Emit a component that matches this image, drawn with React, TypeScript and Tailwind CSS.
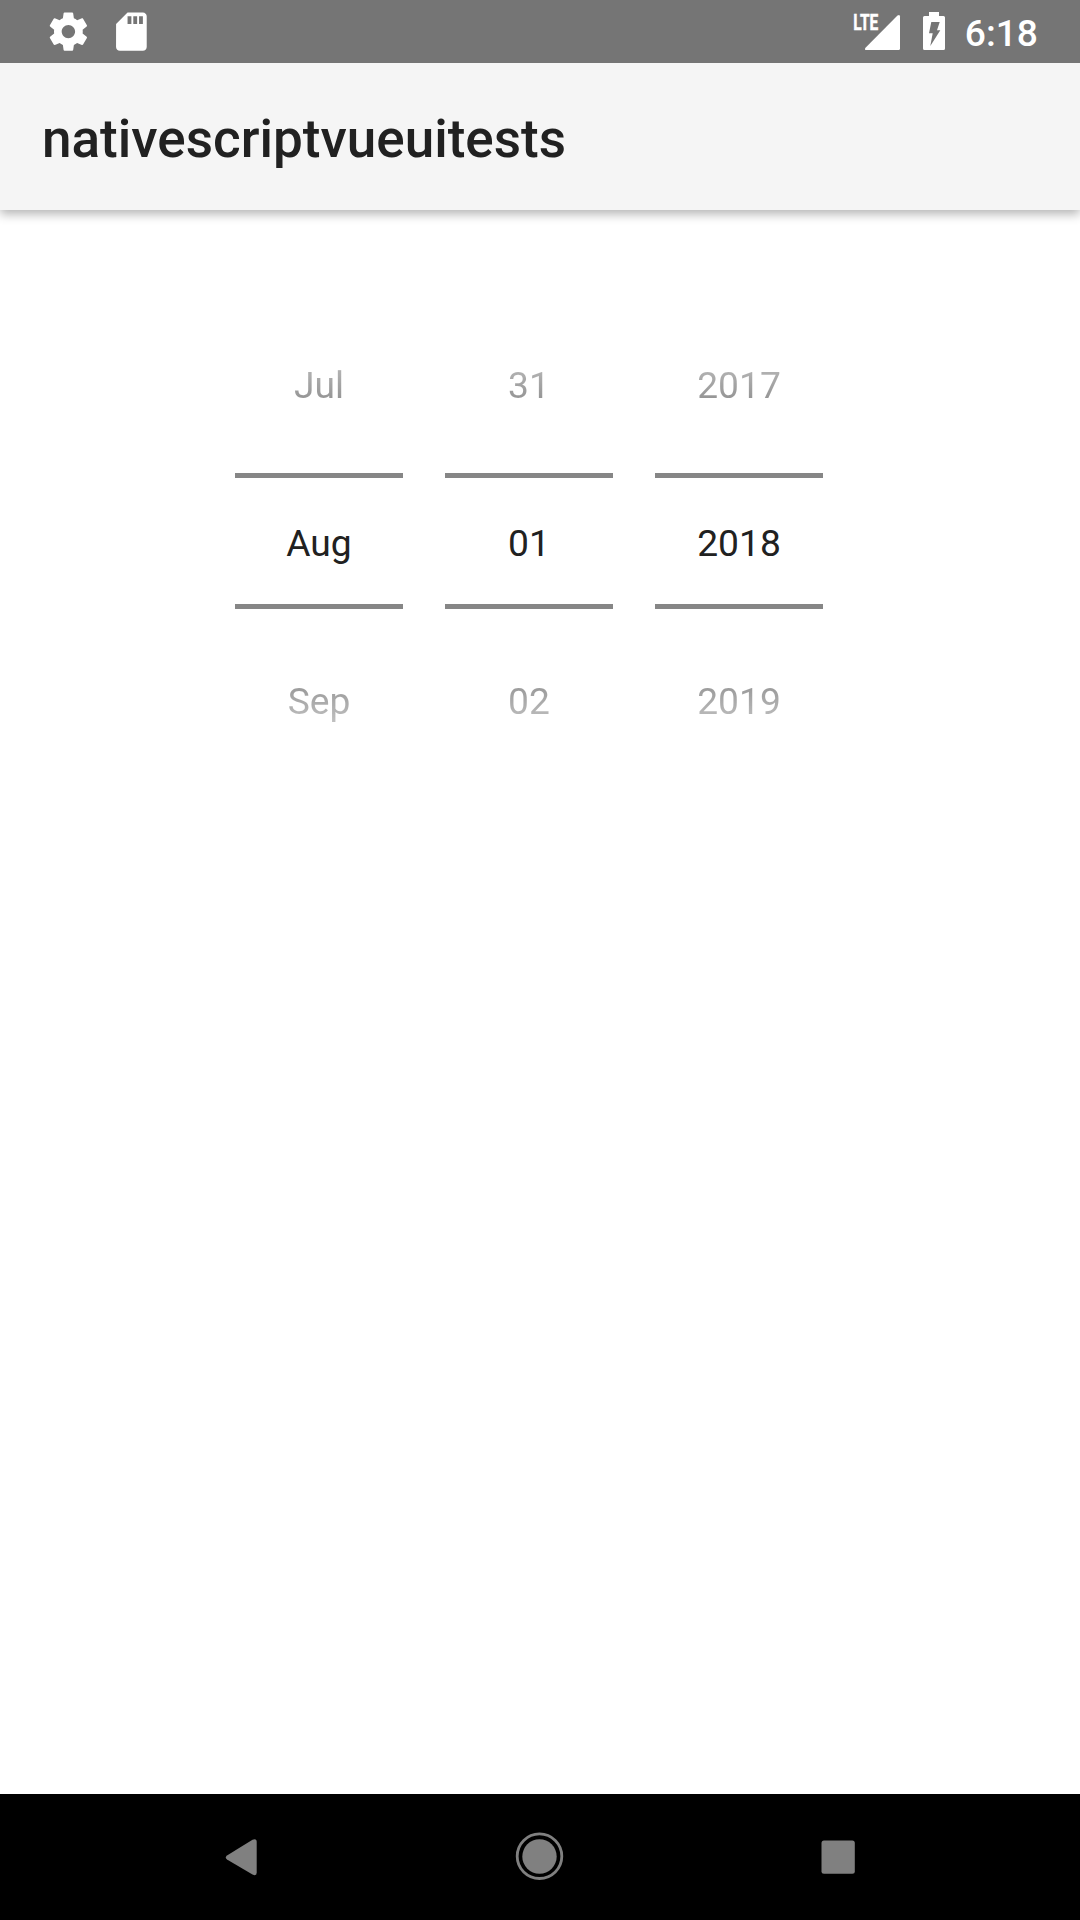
const columns = [
  { prev: 'Jul', current: 'Aug', next: 'Sep' },
  { prev: '31', current: '01', next: '02' },
  { prev: '2017', current: '2018', next: '2019' },
];

function StatusBar() {
  return (
    <div className="flex h-[63px] items-center justify-between bg-[#757575] pl-[45px] pr-[42px] text-white">
      <div className="flex items-center gap-[17px]">
        <svg className="h-[46px] w-[46px]" viewBox="-0.2 0.2 24 24" fill="currentColor">
          <path d="M19.43 12.98c.04-.32.07-.64.07-.98s-.03-.66-.07-.98l2.11-1.65c.19-.15.24-.42.12-.64l-2-3.46c-.12-.22-.39-.3-.61-.22l-2.49 1c-.52-.4-1.08-.73-1.69-.98l-.38-2.65C14.46 2.18 14.25 2 14 2h-4c-.25 0-.46.18-.49.42l-.38 2.65c-.61.25-1.17.59-1.69.98l-2.49-1c-.23-.09-.49 0-.61.22l-2 3.46c-.13.22-.07.49.12.64l2.11 1.65c-.04.32-.07.65-.07.98s.03.66.07.98l-2.11 1.65c-.19.15-.24.42-.12.64l2 3.46c.12.22.39.3.61.22l2.49-1c.52.4 1.08.73 1.69.98l.38 2.65c.03.24.24.42.49.42h4c.25 0 .46-.18.49-.42l.38-2.65c.61-.25 1.17-.59 1.69-.98l2.49 1c.23.09.49 0 .61-.22l2-3.46c.12-.22.07-.49-.12-.64l-2.11-1.65zM12 15.5c-1.93 0-3.5-1.57-3.5-3.5s1.57-3.5 3.5-3.5 3.5 1.57 3.5 3.5-1.57 3.5-3.5 3.5z" />
        </svg>
        <svg className="h-[46px] w-[46px]" viewBox="-0.2 0.2 24 24" fill="currentColor">
          <path d="M18 2h-8L4.02 8 4 20c0 1.1.9 2 2 2h12c1.1 0 2-.9 2-2V4c0-1.1-.9-2-2-2zm-6 6h-2V4h2v4zm3 0h-2V4h2v4zm3 0h-2V4h2v4z" />
        </svg>
      </div>
      <div className="flex items-center">
        <svg className="h-[63px] w-[50px]" viewBox="852 0 50 63" fill="currentColor">
          <text
            x="853.3"
            y="29.700"
            fontFamily="Roboto"
            fontWeight="700"
            fontSize="22.5"
            textLength="25"
            lengthAdjust="spacingAndGlyphs"
            stroke="currentColor"
            strokeWidth="0.5"
          >
            LTE
          </text>
          <path d="M900 16.5V48.500q0 1.500-1.500 1.500H866.500q-2.500 0-1-2.300L897.500 15.500q2.500-1.500 2.500 1z" />
        </svg>
        <svg className="ml-[21px] h-[63px] w-[22px]" viewBox="923 0 22 63" fill="currentColor">
          <path
            fillRule="evenodd"
            d="M929 12h10v4h4.500q1.500 0 1.500 1.500v31q0 1.500-1.500 1.500h-19q-1.500 0-1.500-1.500v-31q0-1.500 1.500-1.500h4.500zM931.300 22L929 33.300h3.700L930.300 46 940.300 30.300h-3.300L939.700 22z"
          />
        </svg>
        <span className="ml-[20px] pt-[3px] text-[37.2px] font-medium leading-[60px]">6:18</span>
      </div>
    </div>
  );
}

function PickerColumn({ prev, current, next }: { prev: string; current: string; next: string }) {
  return (
    <div className="flex w-[168px] flex-col text-center text-[37.2px] text-[#212121]">
      <div className="h-[168px] bg-linear-to-b from-[#2121210c] to-[#212121d0] bg-clip-text pt-[58px] leading-[44px] text-transparent">
        {prev}
      </div>
      <div className="h-[5px] bg-[#868686]" />
      <div className="h-[126px] pt-[43px] leading-[44px]">{current}</div>
      <div className="h-[5px] bg-[#868686]" />
      <div className="h-[168px] bg-linear-to-b from-[#212121d4] to-[#21212104] bg-clip-text pt-[70px] leading-[44px] text-transparent">
        {next}
      </div>
    </div>
  );
}

function NavigationBar() {
  return (
    <div className="flex h-[126px] items-center justify-between bg-black px-[200px] text-[#808080]">
      <svg className="h-[84px] w-[84px]" viewBox="200 1815 84 84" fill="currentColor">
        <path d="M227 1855.500L252.500 1839.700Q256.700 1838 256.700 1842V1872.500Q256.700 1876.500 252.500 1874.500L227 1859.500Q224.500 1857.500 227 1855.500z" />
      </svg>
      <svg className="h-[84px] w-[84px]" viewBox="498 1815 84 84">
        <circle cx="539.5" cy="1856.200" r="22.300" fill="none" stroke="currentColor" strokeWidth="2.800" />
        <circle cx="539.5" cy="1856.500" r="17.200" fill="currentColor" />
      </svg>
      <svg className="h-[84px] w-[84px]" viewBox="796 1815 84 84" fill="currentColor">
        <rect x="821.500" y="1840.500" width="33.300" height="33.300" rx="2.500" />
      </svg>
    </div>
  );
}

export default function App() {
  return (
    <div className="flex h-[1920px] w-[1080px] flex-col overflow-hidden bg-white font-['Roboto',sans-serif]">
      <StatusBar />
      <header className="relative flex h-[147px] items-center bg-[#f5f5f5] pl-[42px] pt-[5px] shadow-[0_4px_10px_rgba(0,0,0,0.3)] [clip-path:inset(0_0_-30px_0)]">
        <h1 className="text-[53.05px] font-medium leading-[62px] text-[#212121]">nativescriptvueuitests</h1>
      </header>
      <main className="flex flex-1 gap-[42px] pl-[235px] pt-[95px]">
        {columns.map((column) => (
          <PickerColumn key={column.current} {...column} />
        ))}
      </main>
      <NavigationBar />
    </div>
  );
}
